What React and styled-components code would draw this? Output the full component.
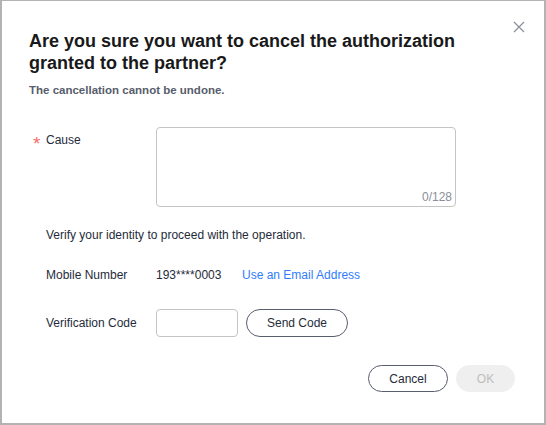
import React from 'react';
import styled, { createGlobalStyle } from 'styled-components';

const GlobalStyle = createGlobalStyle`
  html, body { margin: 0; padding: 0; background: #fff; }
  body { font-family: "Liberation Sans", Arial, sans-serif; }
`;

const Dialog = styled.div`
  position: relative;
  box-sizing: border-box;
  width: 546px;
  height: 425px;
  border: 2px solid #b3b3b3;
  border-top-width: 1px;
  padding: 29px 29px 0 27px;
  color: #252b3a;
  background: #fff;
`;

const Close = styled.button`
  position: absolute;
  top: 19px;
  right: 18px;
  width: 14px;
  height: 14px;
  padding: 0;
  border: none;
  background: none;
  cursor: pointer;
`;

const Title = styled.h2`
  margin: 0;
  font-size: 18px;
  line-height: 22px;
  font-weight: 700;
  color: #191919;
`;

const Subtitle = styled.p`
  margin: 8px 0 0;
  font-size: 11.5px;
  font-weight: 700;
  color: #575d6c;
  line-height: 16px;
`;

const Form = styled.div`
  display: flex;
  flex-direction: column;
  padding-left: 4px;
  margin-top: 29px;
`;

const Row = styled.div`
  display: flex;
  align-items: ${p => (p.$top ? 'flex-start' : 'center')};
  margin-top: ${p => p.$mt || 0}px;
`;

const Label = styled.div`
  box-sizing: border-box;
  width: 123px;
  flex-shrink: 0;
  font-size: 12px;
  color: #252b3a;
  line-height: 16px;
  padding-top: ${p => (p.$top ? 5 : 0)}px;
  display: flex;
  align-items: flex-start;
  padding-left: ${p => (p.$required ? 0 : 13)}px;
`;

const Star = styled.span`
  color: #f66f6a;
  font-size: 19px;
  width: 13px;
  line-height: 16px;
  padding-top: 4px;
  height: 12px;
`;

const AreaWrap = styled.div`
  position: relative;
  box-sizing: border-box;
  width: 300px;
  height: 80px;
  border: 1px solid #c4c4c4;
  border-radius: 4px;
`;

const Counter = styled.span`
  position: absolute;
  right: 3px;
  bottom: 2px;
  font-size: 12px;
  color: #8a8e99;
`;

const Note = styled.div`
  font-size: 12px;
  color: #252b3a;
  padding-left: 13px;
  line-height: 16px;
`;

const Value = styled.span`
  font-size: 12px;
  color: #252b3a;
  width: 86px;
`;

const Link = styled.a`
  font-size: 12px;
  color: #2f7dfa;
  text-decoration: none;
`;

const CodeInput = styled.div`
  box-sizing: border-box;
  width: 82px;
  height: 28px;
  border: 1px solid #c4c4c4;
  border-radius: 4px;
`;

const Pill = styled.button`
  box-sizing: border-box;
  height: ${p => p.$h || 28}px;
  width: ${p => p.$w}px;
  border-radius: 14px;
  border: 1px solid ${p => (p.$disabled ? '#efefef' : '#575d6c')};
  background: ${p => (p.$disabled ? '#efefef' : '#fff')};
  color: ${p => (p.$disabled ? '#bdbdbd' : '#252b3a')};
  font-family: "Liberation Sans", Arial, sans-serif;
  font-size: 12px;
  padding: 0;
  margin-left: ${p => p.$ml || 0}px;
  cursor: pointer;
`;

const Footer = styled.div`
  display: flex;
  justify-content: flex-end;
  margin-top: 28px;
`;

export default function App() {
  return (
    <>
      <GlobalStyle />
      <Dialog>
        <Close aria-label="close">
          <svg width="14" height="14" viewBox="0 0 14 14">
            <path d="M2 2L12 12M12 2L2 12" stroke="#8a8e99" strokeWidth="1.2" />
          </svg>
        </Close>
        <Title>
          Are you sure you want to cancel the authorization
          <br />
          granted to the partner?
        </Title>
        <Subtitle>The cancellation cannot be undone.</Subtitle>
        <Form>
          <Row $top>
            <Label $top $required>
              <Star>*</Star>Cause
            </Label>
            <AreaWrap>
              <Counter>0/128</Counter>
            </AreaWrap>
          </Row>
          <Row $mt={20}>
            <Note>Verify your identity to proceed with the operation.</Note>
          </Row>
          <Row $mt={24}>
            <Label>Mobile Number</Label>
            <Value>193****0003</Value>
            <Link href="#">Use an Email Address</Link>
          </Row>
          <Row $mt={26}>
            <Label>Verification Code</Label>
            <CodeInput />
            <Pill $w={102} $ml={8}>Send Code</Pill>
          </Row>
        </Form>
        <Footer>
          <Pill $w={80} $h={27}>Cancel</Pill>
          <Pill $w={59} $h={27} $ml={8} $disabled>OK</Pill>
        </Footer>
      </Dialog>
    </>
  );
}
